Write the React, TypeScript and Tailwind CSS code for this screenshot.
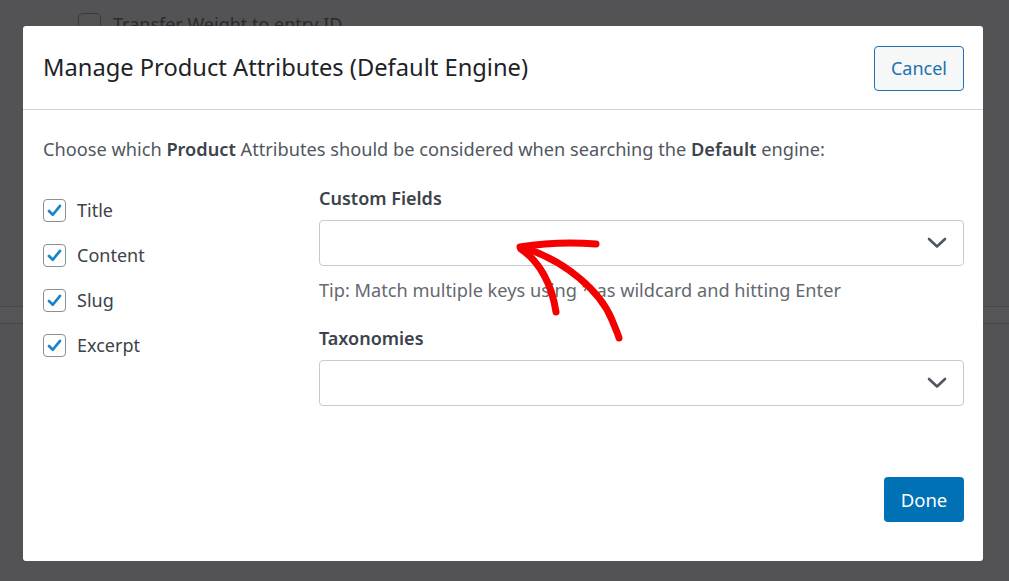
import React from "react";

function Check() {
  return (
    <span className="flex h-[23px] w-[23px] shrink-0 items-center justify-center rounded-[4px] border border-[#8c8f94] bg-white">
      <svg width="17" height="17" viewBox="0 0 20 20">
        <path d="M3.5 10.5 L8 15 L16.5 4.5" fill="none" stroke="#1a86c8" strokeWidth="3.2" strokeLinecap="round" strokeLinejoin="round" />
      </svg>
    </span>
  );
}

function Chevron() {
  return (
    <svg width="20" height="12" viewBox="0 0 20 12">
      <path d="M2 2 L10 9.5 L18 2" fill="none" stroke="#50575e" strokeWidth="2.6" strokeLinecap="round" strokeLinejoin="round" />
    </svg>
  );
}

function Select() {
  return (
    <div className="flex h-[46px] items-center justify-end rounded-[4px] border border-[#c9cacd] bg-white pr-[16px]">
      <Chevron />
    </div>
  );
}

export default function App() {
  const items = ["Title", "Content", "Slug", "Excerpt"];
  return (
    <div
      className="relative h-[581px] w-[1009px] overflow-hidden bg-[#535355]"
      style={{ fontFamily: '"Noto Sans", "Open Sans", sans-serif' }}
    >
      {/* background page */}
      <div className="flex items-center gap-[12px] pl-[78px] pt-[11px]">
        <span className="h-[23px] w-[23px] rounded-[5px] border border-[#3a3a3c]" />
        <span className="text-[18px] text-[#2a2b2d]">Transfer Weight to entry ID</span>
      </div>
      <div className="mt-[268px] h-[18px] border-y border-[#48484a] bg-[#555557]" />

      {/* modal */}
      <div className="absolute left-[23px] top-[26px] flex h-[535px] w-[960px] flex-col rounded-[3px] bg-white">
        <div className="flex h-[84px] items-center justify-between border-b border-[#d0d4d8] pl-[20px] pr-[19px]">
          <h1 className="pt-[1px] text-[23.7px] text-[#1d2327]">Manage Product Attributes (Default Engine)</h1>
          <button className="mt-[2px] h-[45px] w-[90px] rounded-[4px] border border-[#2271b1] bg-[#f6f7f7] text-[18px] text-[#2271b1]">
            Cancel
          </button>
        </div>
        <div className="flex flex-1 flex-col px-[20px] pr-[19px]">
          <p className="mt-[26px] text-[18.2px] text-[#50575e]">
            Choose which <b className="font-semibold text-[#3c434a]">Product</b> Attributes should be considered when searching the{" "}
            <b className="font-semibold text-[#3c434a]">Default</b> engine:
          </p>
          <div className="mt-[21px] flex">
            <div className="flex w-[276px] flex-col gap-[22px] pt-[15px]">
              {items.map((t) => (
                <label key={t} className="flex items-center gap-[11px] text-[18px] text-[#3c434a]">
                  <Check />
                  <span className="leading-[23px]">{t}</span>
                </label>
              ))}
            </div>
            <div className="flex flex-1 flex-col pt-[2px]">
              <div className="text-[18px] font-semibold leading-[24px] text-[#3c434a]">Custom Fields</div>
              <div className="mt-[10px]">
                <Select />
              </div>
              <div className="mt-[12px] text-[18.2px] leading-[24px] text-[#646970]">
                Tip: Match multiple keys using * as wildcard and hitting Enter
              </div>
              <div className="mt-[24px] text-[18px] font-semibold leading-[24px] text-[#3c434a]">Taxonomies</div>
              <div className="mt-[10px]">
                <Select />
              </div>
            </div>
          </div>
          <div className="mt-auto mb-[39px] flex justify-end">
            <button className="h-[45px] w-[80px] rounded-[4px] bg-[#0071b5] text-[18.5px] text-white">Done</button>
          </div>
        </div>
      </div>

      {/* red annotation arrow */}
      <svg className="absolute left-0 top-0" width="1009" height="581" viewBox="0 0 1009 581">
        <g fill="none" stroke="#f40000" strokeWidth="7" strokeLinecap="round" strokeLinejoin="round">
          <path d="M520 247 C 545 243, 570 242, 596 244" />
          <path d="M521 249 C 540 262, 552 285, 556 312" />
          <path d="M528 249 C 565 262, 600 290, 612 320 C 616 330, 618 334, 619 338" />
        </g>
      </svg>
    </div>
  );
}
